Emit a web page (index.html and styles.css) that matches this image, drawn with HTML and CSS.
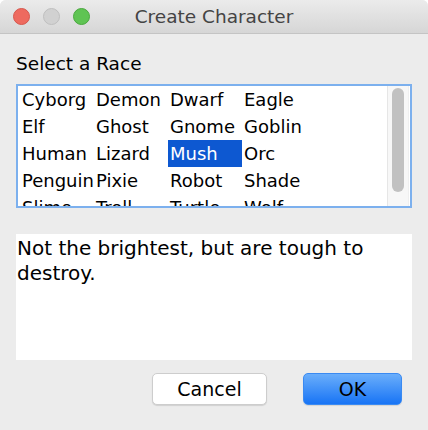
FILE: index.html
```html
<!DOCTYPE html>
<html>
<head>
<meta charset="utf-8">
<link rel="stylesheet" href="styles.css">
</head>
<body>
<div class="window">
  <div class="titlebar">
    <div class="lights">
      <span class="light red"></span>
      <span class="light grey"></span>
      <span class="light green"></span>
    </div>
    <div class="title">Create Character</div>
  </div>
  <div class="content">
    <div class="label">Select a Race</div>
    <div class="listbox">
      <div class="grid">
        <div class="cell">Cyborg</div><div class="cell">Demon</div><div class="cell">Dwarf</div><div class="cell">Eagle</div>
        <div class="cell">Elf</div><div class="cell">Ghost</div><div class="cell">Gnome</div><div class="cell">Goblin</div>
        <div class="cell">Human</div><div class="cell">Lizard</div><div class="cell selected">Mush</div><div class="cell">Orc</div>
        <div class="cell">Penguin</div><div class="cell">Pixie</div><div class="cell">Robot</div><div class="cell">Shade</div>
        <div class="cell">Slime</div><div class="cell">Troll</div><div class="cell">Turtle</div><div class="cell">Wolf</div>
      </div>
      <div class="scrollbar"><div class="thumb"></div></div>
    </div>
    <div class="description">Not the brightest, but are tough to destroy.</div>
    <div class="buttons">
      <button class="btn cancel">Cancel</button>
      <button class="btn ok">OK</button>
    </div>
  </div>
</div>
</body>
</html>
```
FILE: styles.css
```css
html, body {
  margin: 0;
  padding: 0;
  background: #ffffff;
}
body {
  width: 428px;
  height: 430px;
  overflow: hidden;
  font-family: "DejaVu Sans", "Liberation Sans", sans-serif;
}
.window {
  width: 428px;
  height: 430px;
  background: #ececec;
  border-radius: 6px 6px 0 0;
  overflow: hidden;
  display: flex;
  flex-direction: column;
}
.titlebar {
  height: 33px;
  border-bottom: 1px solid #c4c4c4;
  background: linear-gradient(#ebebeb, #d6d6d6);
  position: relative;
  display: flex;
  align-items: center;
  justify-content: center;
  flex-shrink: 0;
}
.lights {
  position: absolute;
  left: 13px;
  top: 8px;
  display: flex;
  gap: 13px;
}
.light {
  width: 17px;
  height: 17px;
  border-radius: 50%;
  box-sizing: border-box;
  display: block;
}
.red { background: #ee6a5f; border: 1px solid #d6574d; }
.grey { background: #d1d1d1; border: 1px solid #bfbfbf; }
.green { background: #5fc453; border: 1px solid #4aa83f; }
.title {
  font-size: 18.5px;
  color: #444444;
  line-height: 33px;
}
.content {
  padding: 18px 16px 0 16px;
  display: flex;
  flex-direction: column;
}
.label {
  font-size: 18.5px;
  line-height: 24px;
  color: #000000;
  height: 24px;
  margin-bottom: 8px;
}
.listbox {
  height: 124px;
  box-sizing: border-box;
  border: 2px solid #7cb0ee;
  background: #fff;
  display: flex;
  overflow: hidden;
  position: relative;
}
.grid {
  display: grid;
  grid-template-columns: repeat(4, 74px);
  grid-auto-rows: 27px;
  padding-left: 2px;
  flex: 1;
  align-content: start;
}
.cell {
  font-size: 18px;
  line-height: 28px;
  padding-left: 2px;
  color: #000000;
  white-space: nowrap;
}
.cell.selected {
  background: #0d58d1;
  color: #ffffff;
}
.scrollbar {
  width: 22px;
  margin-right: 1px;
  background: #f7f7f7;
  border-left: 1px solid #e6e6e6;
  border-right: 1px solid #efefef;
  box-sizing: border-box;
  display: flex;
  justify-content: center;
  padding-top: 2px;
}
.thumb {
  width: 12px;
  height: 104px;
  border-radius: 6px;
  background: #c1c1c1;
}
.description {
  margin-top: 26px;
  height: 126px;
  background: #fff;
  font-size: 20px;
  line-height: 24.5px;
  color: #000000;
  padding: 2px 0 0 1px;
  box-sizing: border-box;
}
.buttons {
  display: flex;
  justify-content: flex-end;
  gap: 36px;
  padding-right: 10px;
  margin-top: 13px;
}
.btn {
  height: 32px;
  border-radius: 5px;
  font-family: "DejaVu Sans", "Liberation Sans", sans-serif;
  font-size: 19px;
  color: #000000;
  padding: 0;
  box-sizing: border-box;
}
.cancel {
  width: 115px;
  background: #ffffff;
  border: 1px solid #cdcdcd;
  box-shadow: 0 1px 1px rgba(0,0,0,0.12);
}
.ok {
  width: 99px;
  background: linear-gradient(#6aaefb, #1874f5);
  border: 1px solid #3a8af2;
  box-shadow: 0 1px 1px rgba(0,0,0,0.10);
}
```
